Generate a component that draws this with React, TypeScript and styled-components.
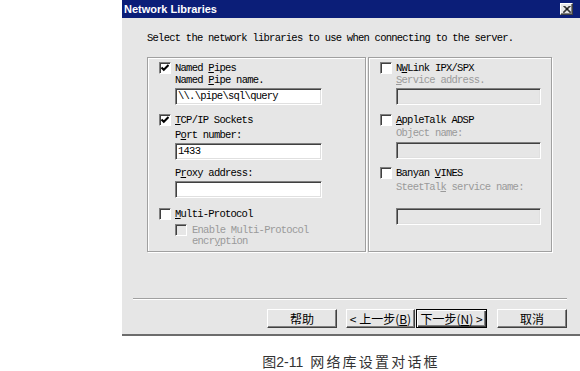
import React from 'react'
import styled, { createGlobalStyle } from 'styled-components'

const GlobalStyle = createGlobalStyle`
  html, body {
    margin: 0;
    padding: 0;
    background: #fff;
  }
  body {
    font-family: 'Liberation Mono', 'Noto Sans CJK SC', monospace;
  }
`

const Page = styled.div`
  width: 580px;
  height: 371px;
  overflow: hidden;
  box-sizing: border-box;
  padding-left: 122px;
  display: flex;
  flex-direction: column;
`

const Dialog = styled.div`
  width: 458px;
  height: 340px;
  box-sizing: border-box;
  background: #e6e6e6;
  border-bottom: 2px solid #6c6c6c;
  display: flex;
  flex-direction: column;
`

const TitleBar = styled.div`
  height: 18px;
  flex: none;
  background: #0b1e78;
  display: flex;
  align-items: center;
  justify-content: space-between;
  padding: 0 7px 0 2px;
`

const Title = styled.span`
  color: #fff;
  font: bold 11px 'Liberation Sans', Arial, sans-serif;
`

const CloseButton = styled.div`
  width: 13px;
  height: 12px;
  box-sizing: border-box;
  background: #e6e6e6;
  border: 1px solid;
  border-color: #fff #404040 #404040 #fff;
  box-shadow: inset -1px -1px 0 #808080;
  display: flex;
  align-items: center;
  justify-content: center;
`

const Intro = styled.div`
  margin: 14px 0 0 25px;
  height: 12px;
  line-height: 12px;
  font-size: 10.5px;
  letter-spacing: -0.75px;
  color: #000;
  white-space: nowrap;
`

const Groups = styled.div`
  display: flex;
  gap: 2px;
  margin: 13px 0 0 25px;
  height: 195px;
`

const GroupBox = styled.div<{ $width: number }>`
  width: ${p => p.$width}px;
  box-sizing: border-box;
  border: 1px solid #a0a0a0;
  box-shadow: inset 1px 1px 0 #fff, 1px 1px 0 #fff;
  padding: 3px 0 0 11px;
  display: flex;
  flex-direction: column;
  align-items: flex-start;
`

const CheckRow = styled.div<{ $top?: number }>`
  display: flex;
  align-items: center;
  gap: 4px;
  height: 13px;
  margin-top: ${p => p.$top ?? 0}px;
`

const DisabledRow = styled.div`
  display: flex;
  align-items: flex-start;
  gap: 5px;
  margin: 4px 0 0 16px;
`

const Box = styled.div<{ $disabled?: boolean }>`
  width: 12px;
  height: 12px;
  flex: none;
  box-sizing: border-box;
  background: ${p => (p.$disabled ? '#e6e6e6' : '#fff')};
  border: 1px solid;
  border-color: #808080 #fff #fff #808080;
  box-shadow: inset 1px 1px 0 #404040;
  display: flex;
  align-items: center;
  justify-content: center;
`

const Text = styled.span`
  font-size: 10.5px;
  letter-spacing: -0.75px;
  line-height: 12px;
  color: #000;
  white-space: nowrap;
`

const WrapText = styled.span`
  font-size: 10.5px;
  letter-spacing: -0.75px;
  line-height: 11px;
  color: #9a9a9a;
  margin-top: 1px;
`

const FieldLabel = styled.div<{ $top?: number; $disabled?: boolean }>`
  margin: ${p => p.$top ?? 0}px 0 0 16px;
  height: 12px;
  line-height: 12px;
  font-size: 10.5px;
  letter-spacing: -0.75px;
  color: ${p => (p.$disabled ? '#9a9a9a' : '#000')};
  white-space: nowrap;
`

const TextBox = styled.div<{ $top?: number; $width: number; $disabled?: boolean }>`
  margin: ${p => p.$top ?? 2}px 0 0 16px;
  width: ${p => p.$width}px;
  height: 17px;
  box-sizing: border-box;
  background: ${p => (p.$disabled ? '#e6e6e6' : '#fff')};
  border: 1px solid;
  border-color: #808080 #fff #fff #808080;
  box-shadow: inset 1px 1px 0 #404040, inset -1px -1px 0 #e0e0e0;
  padding: 0 0 0 2px;
  font-size: 10.5px;
  letter-spacing: -0.75px;
  line-height: 15px;
  color: #000;
  white-space: nowrap;
`

const Mn = styled.span`
  text-decoration: underline;
  text-underline-offset: 1px;
`

const Separator = styled.div`
  margin: 46px 13px 0 11px;
  border-top: 1px solid #a0a0a0;
  border-bottom: 1px solid #fff;
`

const ButtonRow = styled.div`
  display: flex;
  justify-content: flex-end;
  margin-top: 9px;
  padding-right: 13px;
`

const Button = styled.div<{ $width: number; $gap?: number; $default?: boolean }>`
  width: ${p => p.$width}px;
  height: 19px;
  margin-left: ${p => p.$gap ?? 0}px;
  box-sizing: border-box;
  background: #e6e6e6;
  border: 1px solid;
  border-color: ${p => (p.$default ? '#000' : '#fff #404040 #404040 #fff')};
  box-shadow: ${p =>
    p.$default
      ? 'inset 1px 1px 0 #fff, inset -1px -1px 0 #404040, inset -2px -2px 0 #808080'
      : 'inset -1px -1px 0 #808080'};
  display: flex;
  align-items: center;
  justify-content: center;
  font: 12px 'Noto Sans CJK SC', 'Liberation Sans', sans-serif;
  color: #000;
  white-space: nowrap;
`

const Caption = styled.div`
  width: 458px;
  margin-top: 15px;
  line-height: 16px;
  text-align: center;
  font: 14px 'Liberation Sans', 'Noto Sans CJK SC', sans-serif;
  color: #333;
`

const CaptionZh = styled.span`
  letter-spacing: 2.2px;
  margin-left: 7px;
`

const Check = () => (
  <svg width="8" height="8" viewBox="0 0 8 8">
    <polyline points="0.5,3.5 2.8,5.8 7.5,1" fill="none" stroke="#000" strokeWidth="2" />
  </svg>
)

const CloseIcon = () => (
  <svg width="8" height="7" viewBox="0 0 8 7">
    <path d="M0.5 0 L7.5 7 M7.5 0 L0.5 7 M1.5 0 L8 6.5 M6.5 0 L0 6.5" stroke="#000" strokeWidth="1" fill="none" />
  </svg>
)

export default function App() {
  return (
    <>
      <GlobalStyle />
      <Page>
        <Dialog>
          <TitleBar>
            <Title>Network Libraries</Title>
            <CloseButton>
              <CloseIcon />
            </CloseButton>
          </TitleBar>

          <Intro>Select the network libraries to use when connecting to the server.</Intro>

          <Groups>
            <GroupBox $width={219}>
              <CheckRow>
                <Box><Check /></Box>
                <Text>Named <Mn>P</Mn>ipes</Text>
              </CheckRow>
              <FieldLabel>Named <Mn>P</Mn>ipe name.</FieldLabel>
              <TextBox $width={147}>\\.\pipe\sql\query</TextBox>

              <CheckRow $top={8}>
                <Box><Check /></Box>
                <Text><Mn>T</Mn>CP/IP Sockets</Text>
              </CheckRow>
              <FieldLabel $top={3}>P<Mn>o</Mn>rt number:</FieldLabel>
              <TextBox $width={147}>1433</TextBox>
              <FieldLabel $top={7}>P<Mn>r</Mn>oxy address:</FieldLabel>
              <TextBox $width={147} />

              <CheckRow $top={9}>
                <Box />
                <Text><Mn>M</Mn>ulti-Protocol</Text>
              </CheckRow>
              <DisabledRow>
                <Box $disabled />
                <WrapText>
                  Enable Multi-Protocol
                  <br />
                  encr<Mn>y</Mn>ption
                </WrapText>
              </DisabledRow>
            </GroupBox>

            <GroupBox $width={184}>
              <CheckRow>
                <Box />
                <Text>N<Mn>W</Mn>Link IPX/SPX</Text>
              </CheckRow>
              <FieldLabel $disabled><Mn>S</Mn>ervice address.</FieldLabel>
              <TextBox $width={145} $disabled />

              <CheckRow $top={8}>
                <Box />
                <Text><Mn>A</Mn>ppleTalk ADSP</Text>
              </CheckRow>
              <FieldLabel $top={1} $disabled>Ob<Mn>j</Mn>ect name:</FieldLabel>
              <TextBox $top={3} $width={145} $disabled />

              <CheckRow $top={7}>
                <Box />
                <Text>Banyan <Mn>V</Mn>INES</Text>
              </CheckRow>
              <FieldLabel $top={2} $disabled>SteetTal<Mn>k</Mn> service name:</FieldLabel>
              <TextBox $top={15} $width={145} $disabled />
            </GroupBox>
          </Groups>

          <Separator />

          <ButtonRow>
            <Button $width={70}>帮助</Button>
            <Button $width={69} $gap={9}>
              &lt; 上一步(<Mn>B</Mn>)
            </Button>
            <Button $width={71} $gap={1} $default>
              下一步(<Mn>N</Mn>) &gt;
            </Button>
            <Button $width={70} $gap={10}>取消</Button>
          </ButtonRow>
        </Dialog>
        <Caption>
          图2-11<CaptionZh>网络库设置对话框</CaptionZh>
        </Caption>
      </Page>
    </>
  )
}
